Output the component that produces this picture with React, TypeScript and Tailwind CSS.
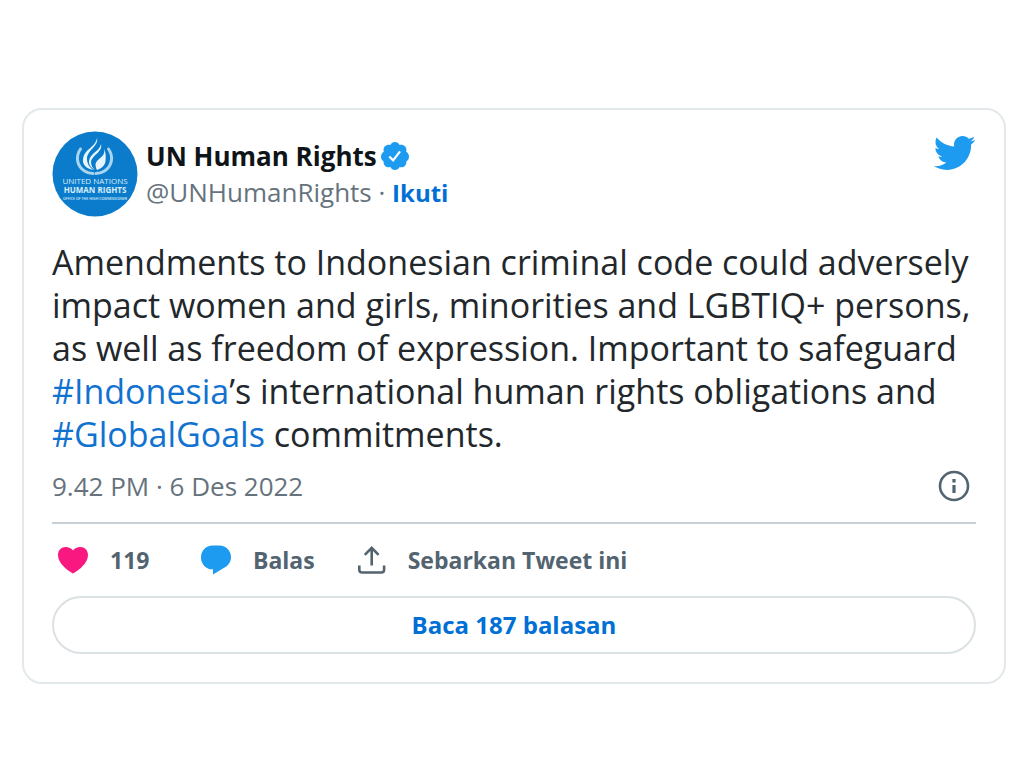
import React from 'react'

const actions = [
  { id: 'like', label: '119', name: 'Suka 119', Icon: HeartIcon },
  { id: 'reply', label: 'Balas', name: 'Balas', Icon: ReplyIcon },
  { id: 'share', label: 'Sebarkan Tweet ini', name: 'Sebarkan Tweet ini', Icon: ShareIcon },
]

function HeartIcon() {
  return (
    <svg viewBox="0 0 32 28" className="w-8 h-7 shrink-0" fill="#f91880" aria-hidden="true">
      <path d="M16 27.500 C9.500 23.800 1 17 1 9 C1 4.200 4.400 1 8.500 1 C11.800 1 14.600 2.200 16 4.600 C17.400 2.200 20.200 1 23.500 1 C27.600 1 31 4.200 31 9 C31 17 22.500 23.800 16 27.500Z" />
    </svg>
  )
}

function ReplyIcon() {
  return (
    <svg viewBox="0 0 32 30" className="w-8 h-[30px] shrink-0" fill="#1d9bf0" aria-hidden="true">
      <path d="M12.500 0.500h7C26.200 0.500 31 5.700 31 12.200c0 4.300-2.300 8-6 10L13 29.500v-5.200h-.5C5.800 24.300 1 18.900 1 12.400 1 5.700 5.800 0.500 12.500 0.500z" />
    </svg>
  )
}

function ShareIcon() {
  return (
    <svg viewBox="0 0 30 30" className="w-[30px] h-[30px] shrink-0" fill="none" stroke="#536471" strokeWidth="2.600" aria-hidden="true">
      <path d="M14.700 20.500V3M7.800 9.800l6.900-6.900 6.900 6.900" />
      <path d="M2.300 20.500v4.200c0 1.700 1.100 2.800 2.800 2.800h19.200c1.700 0 2.800-1.100 2.800-2.800v-4.200" />
    </svg>
  )
}

function VerifiedIcon() {
  return (
    <svg viewBox="0 0 24 24" className="w-8 h-8 shrink-0" fill="#1d9bf0" role="img" aria-label="Akun terverifikasi">
      <path d="M22.500 12.500c0-1.580-.875-2.950-2.148-3.600.154-.435.238-.905.238-1.400 0-2.210-1.710-3.998-3.818-3.998-.47 0-.92.084-1.336.25C14.818 2.415 13.510 1.500 12 1.500s-2.816.917-3.437 2.250c-.415-.165-.866-.25-1.336-.25-2.110 0-3.818 1.790-3.818 4 0 .494.083.964.237 1.400-1.272.65-2.147 2.018-2.147 3.600 0 1.495.782 2.798 1.942 3.486-.02.170-.032.340-.032.514 0 2.210 1.708 4 3.818 4 .47 0 .92-.086 1.335-.25.620 1.334 1.926 2.250 3.437 2.250 1.512 0 2.818-.916 3.437-2.250.415.163.865.248 1.336.248 2.110 0 3.818-1.790 3.818-4 0-.174-.012-.344-.033-.513 1.158-.687 1.943-1.990 1.943-3.484z" />
      <path d="M7.700 12.400l2.900 2.900 5.200-6.800" fill="none" stroke="#fff" strokeWidth="1.700" />
    </svg>
  )
}

function BirdIcon() {
  return (
    <svg viewBox="0 0 24 24" className="w-11 h-11" fill="#1d9bf0" aria-hidden="true">
      <path d="M23.643 4.937c-.835.370-1.732.620-2.675.733.962-.576 1.700-1.490 2.048-2.578-.9.534-1.897.922-2.958 1.130-.85-.904-2.060-1.470-3.400-1.470-2.572 0-4.658 2.086-4.658 4.660 0 .364.042.718.120 1.060-3.873-.195-7.304-2.050-9.602-4.868-.4.690-.63 1.490-.63 2.342 0 1.616.823 3.043 2.072 3.878-.764-.025-1.482-.234-2.110-.583v.060c0 2.257 1.605 4.140 3.737 4.568-.392.106-.803.162-1.227.162-.3 0-.593-.028-.877-.082.593 1.850 2.313 3.198 4.352 3.234-1.595 1.250-3.604 1.995-5.786 1.995-.376 0-.747-.022-1.112-.065 2.062 1.323 4.510 2.093 7.140 2.093 8.570 0 13.255-7.098 13.255-13.254 0-.2-.005-.402-.014-.602.910-.658 1.700-1.477 2.323-2.410z" />
    </svg>
  )
}

function InfoIcon() {
  return (
    <svg viewBox="0 0 32 32" className="w-8 h-8" fill="none" stroke="#536471" strokeWidth="2.600" aria-hidden="true">
      <circle cx="16" cy="16" r="14" />
      <path d="M16 15v8M16 9v3.500" strokeWidth="3.200" />
    </svg>
  )
}

function Avatar() {
  return (
    <svg viewBox="0 0 86 86" className="w-[86px] h-[86px] shrink-0 font-['Open_Sans',sans-serif]" role="img" aria-label="UN Human Rights">
      <circle cx="43" cy="43" r="42.500" fill="#0b7bcb" />
      {/* Laurel */}
      <g fill="none" stroke="#a9d5f1" strokeWidth="3" strokeLinecap="round">
        <path d="M28.500 18c-5 7-4 17 4 22 3 2 6 2.500 8.500 2.500" />
        <path d="M56.500 18c5 7 4 17-4 22-3 2-6 2.500-8.500 2.500" />
      </g>
      {/* Flame */}
      <g fill="#e8f5fd">
        <path d="M45 7c2 8-10 12-10 21 0 5 3 9 7 11-7-1-12-5-11-11C32 18 44 16 45 7z" />
        <path d="M49 13c2 8-9 11-10 18 0 3 1.500 6 4 8-8-4-7-11-3-15 4-4 8-6 9-11z" />
        <path d="M52 18c2 8-7 9-8.500 15 0 2.500.5 4.500 1.500 6 5-1.500 8-5 8.500-9 .5-4 .5-8-1.500-12z" />
      </g>
      <g fill="#d8edfa" textAnchor="middle">
        <text x="43" y="53" fontSize="8">UNITED NATIONS</text>
        <text x="43" y="62" fontSize="8" fontWeight="700">HUMAN RIGHTS</text>
        <text x="43" y="69" fontSize="3.600" fontWeight="600">OFFICE OF THE HIGH COMMISSIONER</text>
      </g>
    </svg>
  )
}

function TweetHeader() {
  return (
    <header className="flex items-start justify-between">
      <div className="flex items-center gap-2">
        <Avatar />
        <div className="leading-9">
          <div className="flex items-center gap-0.5">
            <a href="#profile" className="text-[26px] font-bold text-[#0f1419]">UN Human Rights</a>
            <VerifiedIcon />
          </div>
          <div className="text-[26px] text-[#66737d]">
            <a href="#profile">@UNHumanRights</a>
            {' · '}
            <a href="#follow" className="text-2xl leading-9 font-bold text-[#006fd6]">Ikuti</a>
          </div>
        </div>
      </div>
      <a href="#tweet" aria-label="Lihat di Twitter">
        <BirdIcon />
      </a>
    </header>
  )
}

export default function App() {
  return (
    <main className="min-h-screen bg-white pt-[108px] pb-20 pl-[22px] pr-[18px] font-['Open_Sans','Noto_Sans',sans-serif]">
      <article className="rounded-[20px] border-2 border-[#e3e8eb] px-7 pt-[21px] pb-7">
        <TweetHeader />

        <p className="mt-6 text-[34px] leading-[43px] text-[#22272b]">
          Amendments to Indonesian criminal code could adversely impact women and girls, minorities and
          LGBTIQ+ persons, as well as freedom of expression. Important to safeguard{' '}
          <a href="#indonesia" className="text-[#1272cf]">#Indonesia</a>’s international human rights obligations and{' '}
          <a href="#globalgoals" className="text-[#1272cf]">#GlobalGoals</a> commitments.
        </p>

        <div className="mt-3 flex items-center justify-between pr-1.5">
          <a href="#tweet" className="text-[26px] leading-9 text-[#66737d]">9.42 PM · 6 Des 2022</a>
          <button type="button" aria-label="Info">
            <InfoIcon />
          </button>
        </div>

        <div className="mt-[18px] flex items-center gap-[42px] border-t-2 border-[#c8d0d5] pl-[5px] pt-5">
          {actions.map(({ id, label, name, Icon }) => (
            <button
              key={id}
              type="button"
              aria-label={name}
              className="flex items-center gap-[21px] text-[23px] leading-8 font-bold text-[#536471]"
            >
              <Icon />
              <span className="min-w-12 text-left">{label}</span>
            </button>
          ))}
        </div>

        <button
          type="button"
          className="mt-5 h-[58px] w-full rounded-full border-2 border-[#dce1e4] text-2xl font-bold text-[#006fd6]"
        >
          Baca 187 balasan
        </button>
      </article>
    </main>
  )
}
